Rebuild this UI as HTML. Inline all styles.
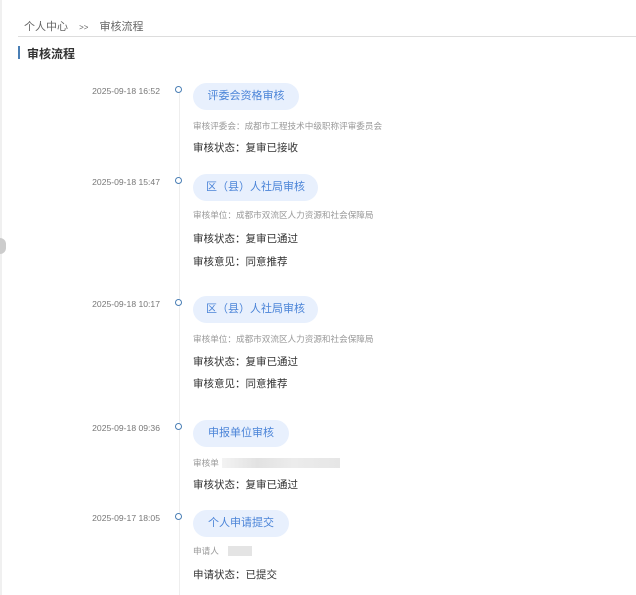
<!DOCTYPE html>
<html><head><meta charset="utf-8"><style>
body{margin:0;width:636px;height:595px;background:#fff;position:relative;overflow:hidden;font-family:"Liberation Sans","Noto Sans CJK SC",sans-serif}
.a{position:absolute;white-space:nowrap}
.d{font-size:8.6px;color:#777;width:80px;text-align:right;left:80px}
.dot{position:absolute;left:175px;width:5px;height:5px;border:1.5px solid #4a7fb5;border-radius:50%;background:#fff}
.p{position:absolute;left:193px;height:27px;border-radius:14px;background:#e8f0fd;color:#4b84d8;font-size:11px;line-height:27px;text-align:center}
.s{font-size:8.6px;color:#999;left:193px}
.t{font-size:10.5px;color:#333;left:193px}
</style></head><body>
<div style="position:absolute;left:0;top:0;width:2px;height:595px;background:#f0f0f0"></div>
<div style="position:absolute;left:-6px;top:238px;width:12px;height:16px;border-radius:8px;background:#ccc"></div>
<div class="a" style="left:24px;top:18px;font-size:11px;color:#666">个人中心 <span style="margin:0 8px;font-size:8px">&gt;&gt;</span> 审核流程</div>
<div style="position:absolute;left:18px;top:36px;width:618px;height:1px;background:#ddd"></div>
<div style="position:absolute;left:18px;top:46px;width:2px;height:13px;background:#4a7fb5"></div>
<div class="a" style="left:27px;top:45px;font-size:12px;font-weight:bold;color:#333">审核流程</div>
<div style="position:absolute;left:179px;top:92px;width:1px;height:503px;background:#eee"></div>

<div class="a d" style="top:86px">2025-09-18 16:52</div><div class="dot" style="top:86px"></div>
<div class="p" style="top:83px;width:106px">评委会资格审核</div>
<div class="a s" style="top:120px">审核评委会：成都市工程技术中级职称评审委员会</div>
<div class="a t" style="top:140px">审核状态：复审已接收</div>

<div class="a d" style="top:177px">2025-09-18 15:47</div><div class="dot" style="top:177px"></div>
<div class="p" style="top:174px;width:125px">区（县）人社局审核</div>
<div class="a s" style="top:209px">审核单位：成都市双流区人力资源和社会保障局</div>
<div class="a t" style="top:231px">审核状态：复审已通过</div>
<div class="a t" style="top:254px">审核意见：同意推荐</div>

<div class="a d" style="top:299px">2025-09-18 10:17</div><div class="dot" style="top:299px"></div>
<div class="p" style="top:296px;width:125px">区（县）人社局审核</div>
<div class="a s" style="top:333px">审核单位：成都市双流区人力资源和社会保障局</div>
<div class="a t" style="top:354px">审核状态：复审已通过</div>
<div class="a t" style="top:376px">审核意见：同意推荐</div>

<div class="a d" style="top:423px">2025-09-18 09:36</div><div class="dot" style="top:423px"></div>
<div class="p" style="top:420px;width:96px">申报单位审核</div>
<div class="a s" style="top:457px">审核单</div>
<div style="position:absolute;left:222px;top:458px;width:118px;height:10px;background:linear-gradient(90deg,#f3f3f3,#e2e2e2 30%,#ececec 60%,#e6e6e6)"></div>
<div class="a t" style="top:477px">审核状态：复审已通过</div>

<div class="a d" style="top:513px">2025-09-17 18:05</div><div class="dot" style="top:513px"></div>
<div class="p" style="top:510px;width:96px">个人申请提交</div>
<div class="a s" style="top:545px">申请人</div>
<div style="position:absolute;left:228px;top:546px;width:24px;height:10px;background:#e4e4e4"></div>
<div class="a t" style="top:567px">申请状态：已提交</div>
</body></html>
